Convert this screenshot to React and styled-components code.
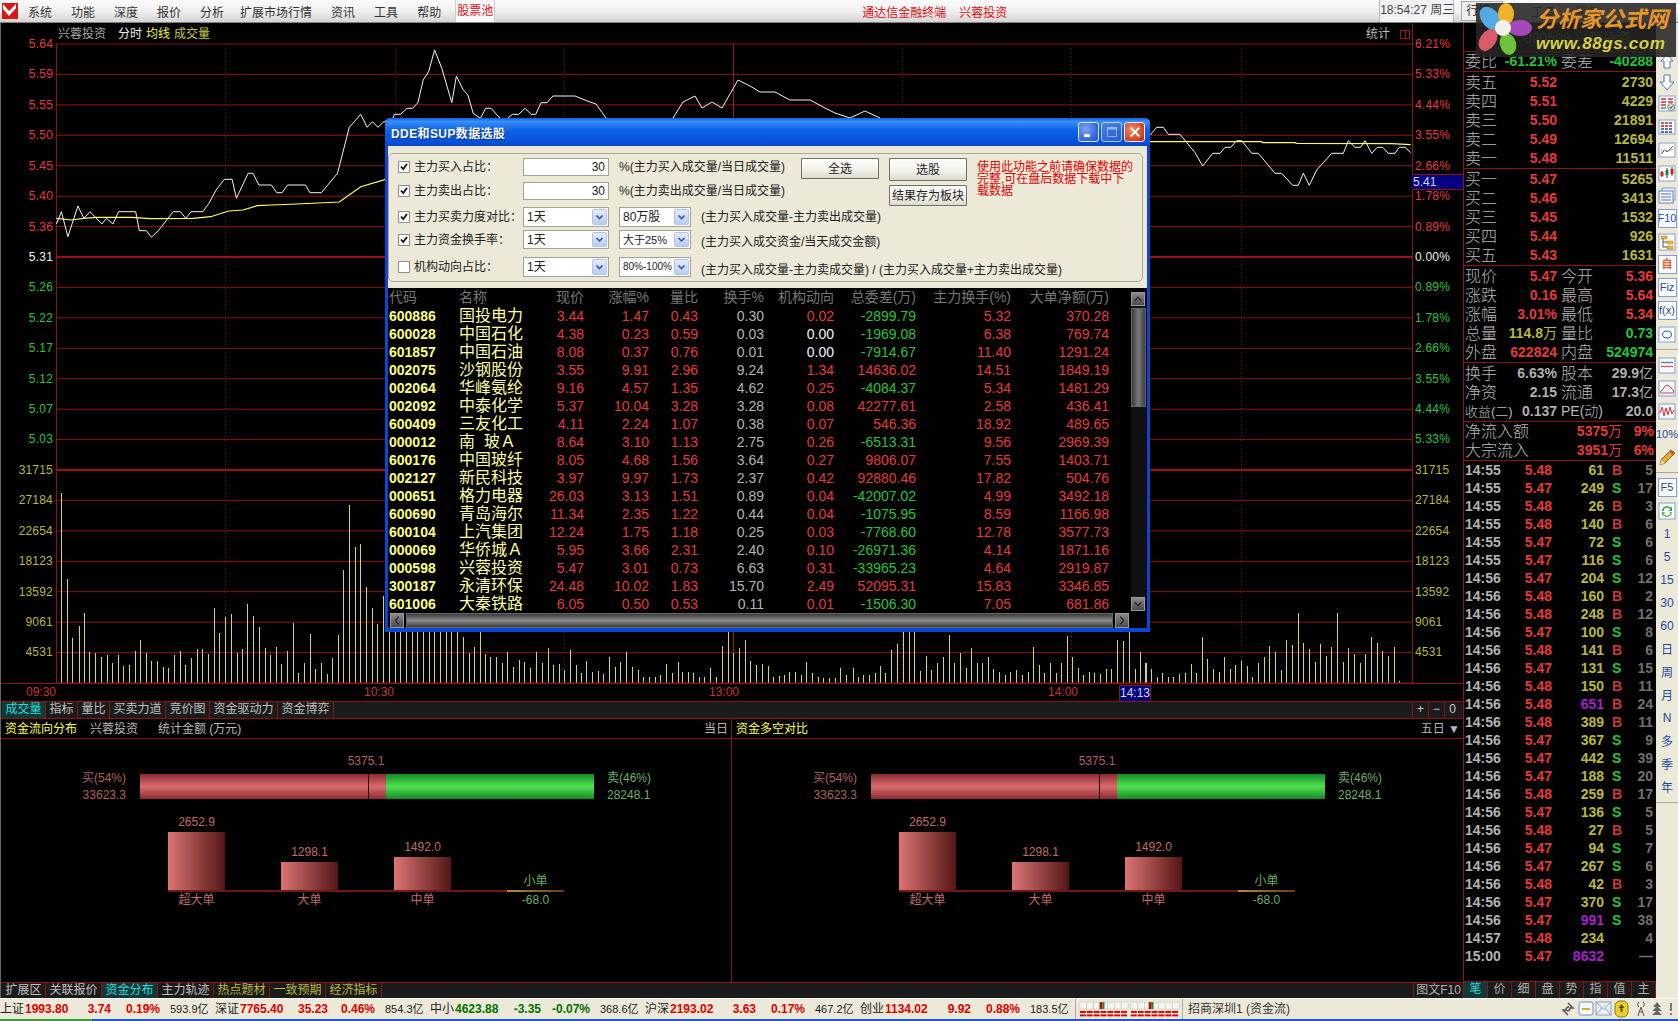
import React from 'react'
import styled, { createGlobalStyle } from 'styled-components'

const RED = '#8c1414'
const UP = '#e63a3a'
const DOWN = '#25c43a'
const OLIVE = '#b8b83a'

const GlobalStyle = createGlobalStyle`
  html, body { margin: 0; padding: 0; background: #000; overflow: hidden; }
  body { font-family: "Liberation Sans", "Noto Sans CJK SC", sans-serif; font-size: 12px; }
  * { box-sizing: border-box; }
`

const Page = styled.div`
  position: relative;
  width: 1678px;
  height: 1021px;
  display: flex;
  flex-direction: column;
  overflow: hidden;
`

/* ---- menu ---- */
const MenuBar = styled.div`
  height: 23px;
  flex: none;
  display: flex;
  align-items: center;
  background: linear-gradient(#fbfbfb, #f0f0f0 50%, #d4d4d4);
  border-bottom: 1px solid #808080;
  color: #333;
  font-size: 12px;
  padding-left: 2px;
`
const MenuLogo = styled.svg`
  width: 16px;
  height: 16px;
  margin-right: 10px;
  flex: none;
`
const MenuItem = styled.span`
  margin-right: 19px;
  margin-left: ${p => p.$ml || 0}px;
  white-space: nowrap;
`
const PoolButton = styled.span`
  width: 40px;
  height: 22px;
  margin-left: -5px;
  line-height: 22px;
  text-align: center;
  color: #e01010;
  background: #f8f8f8;
  border-left: 1px solid #ccc;
  border-right: 1px solid #ccc;
`
const MenuTitle = styled.span`
  color: ${p => p.$dim ? '#555' : '#e01010'};
  margin-left: ${p => p.$ml}px;
  white-space: nowrap;
`
const ClockBox = styled.span`
  width: 75px;
  height: 22px;
  margin-left: 372px;
  line-height: 21px;
  text-align: center;
  color: #444;
  font-size: 12px;
  white-space: nowrap;
  background: #f2f2f2;
  border-left: 1px solid #bbb;
  border-right: 1px solid #bbb;
`
const QuoteButton = styled.span`
  width: 42px;
  height: 20px;
  margin-left: 7px;
  padding-left: 4px;
  line-height: 18px;
  color: #333;
  border: 1px solid #aaa;
  background: #eee;
`

/* ---- page columns ---- */
const Main = styled.div`
  flex: 1;
  min-height: 0;
  display: flex;
`
const LeftColumn = styled.div`
  width: 1463px;
  flex: none;
  display: flex;
  flex-direction: column;
  border-left: 1px solid #666;
  background: #000;
`

/* ---- chart ---- */
const Chart = styled.div`
  position: relative;
  height: 660px;
  flex: none;
  display: flex;
`
const ChartTitle = styled.div`
  position: absolute;
  left: 57px;
  top: 2px;
  display: flex;
  gap: 4px;
  line-height: 18px;
  font-size: 12px;
  white-space: nowrap;
  color: #f0f0f0;
`
const TitleText = styled.span`
  color: ${p => p.$color || '#f0f0f0'};
  margin-right: ${p => p.$mr || 0}px;
`
const ChartStat = styled.div`
  position: absolute;
  left: 1365px;
  top: 2px;
  line-height: 18px;
  color: #bbb;
  display: flex;
  align-items: center;
  gap: 10px;
`
const StatIcon = styled.span`
  width: 10px;
  height: 9px;
  border: 1px solid #a01818;
  background: linear-gradient(90deg, transparent 4px, #a01818 4px, #a01818 5px, transparent 5px);
`
const Axis = styled.div`
  width: ${p => p.$w}px;
  flex: none;
  padding-top: 6px;
  ${p => p.$right ? `border-left: 1px solid ${RED}; padding-left: 2px;` : ''}
`
const AxisLabel = styled.div`
  height: 30.43px;
  line-height: 30px;
  font-size: 12px;
  color: ${p => p.$color};
  text-align: ${p => p.$right ? 'left' : 'right'};
  padding-right: ${p => p.$right ? 0 : 3}px;
  letter-spacing: 0.2px;
`
const Plot = styled.svg`
  width: 1356px;
  height: 660px;
  flex: none;
  display: block;
`
const PriceFlag = styled.div`
  position: absolute;
  left: 1411px;
  top: 151px;
  width: 51px;
  height: 16px;
  background: #000080;
  border-top: 1px solid ${RED};
  border-bottom: 1px solid ${RED};
  color: #d8d8ff;
  line-height: 14px;
  padding-left: 1px;
  font-size: 12px;
`

/* ---- time axis ---- */
const TimeRow = styled.div`
  height: 18px;
  flex: none;
  display: flex;
  align-items: stretch;
  border-top: 1px solid ${RED};
  line-height: 17px;
  color: #c83232;
`
const TimeLabel = styled.span`
  margin-left: ${p => p.$ml}px;
  width: 30px;
  white-space: nowrap;
`
const TimeCursor = styled.span`
  margin-left: ${p => p.$ml}px;
  width: 32px;
  margin-top: 1px;
  background: #000080;
  border: 1px solid ${RED};
  border-bottom: 0;
  color: #d8d8ff;
  text-align: center;
  line-height: 14px;
`

/* ---- tabs ---- */
const TabRow = styled.div`
  height: ${p => p.$h}px;
  flex: none;
  display: flex;
  background: #1b1b1b;
  border-top: 1px solid ${RED};
  padding-left: 1px;
  padding-right: ${p => p.$pr || 0}px;
`
const Tab = styled.span`
  padding: 0 3.5px;
  line-height: ${p => p.$lh || 15}px;
  white-space: nowrap;
  color: ${p => p.$active ? '#35d8d8' : p.$olive ? '#b8b83a' : '#c0c0c0'};
  background: ${p => p.$active ? '#0e3a3a' : 'transparent'};
  border-right: 1px solid ${RED};
`
const TabSpacer = styled.span`
  flex: 1;
`
const ZoomCell = styled.span`
  width: 16px;
  line-height: 15px;
  text-align: center;
  color: #ccc;
  border-left: 1px solid ${RED};
`
const TabWide = styled.span`
  width: 50px;
  line-height: 15px;
  text-align: center;
  color: #b0b0b0;
  border-left: 1px solid ${RED};
`

/* ---- fund panels ---- */
const PanelHeader = styled.div`
  height: 21px;
  flex: none;
  display: flex;
  align-items: center;
  border-top: 1px solid ${RED};
  border-bottom: 1px solid ${RED};
  color: #b8b8b8;
  line-height: 18px;
`
const HeaderCell = styled.div`
  width: ${p => p.$w}px;
  height: 100%;
  flex: none;
  display: flex;
  align-items: center;
  padding: 0 3px 0 4px;
  ${p => p.$split ? `border-right: 1px solid ${RED};` : ''}
`
const HeaderTitle = styled.span`
  color: #ffff40;
  margin-right: 13px;
`
const HeaderNote = styled.span`
  margin-right: ${p => p.$mr || 0}px;
`
const HeaderEnd = styled.span`
  margin-left: auto;
  white-space: nowrap;
`
const Panels = styled.div`
  flex: 1;
  min-height: 0;
  display: flex;
`
const Panel = styled.div`
  width: ${p => p.$w}px;
  flex: none;
  padding: 35px 0 0 ${p => p.$pl}px;
  ${p => p.$split ? `border-right: 1px solid ${RED};` : ''}
`
const FlowRow = styled.div`
  display: flex;
  align-items: center;
  height: 25px;
`
const FlowLabels = styled.div`
  width: ${p => p.$w}px;
  flex: none;
  text-align: ${p => p.$side === 'left' ? 'right' : 'left'};
  line-height: 17px;
  color: ${p => p.$side === 'left' ? '#b06060' : '#68b068'};
`
const FlowBar = styled.div`
  position: relative;
  width: 454px;
  height: 25px;
  flex: none;
  margin: 0 13px 0 14px;
  display: flex;
`
const FlowBuy = styled.div`
  width: 246px;
  background: linear-gradient(#8c2a30, #d96c6c 50%, #8c2a30);
`
const FlowSell = styled.div`
  flex: 1;
  background: linear-gradient(#128a25, #52e052 50%, #128a25);
`
const FlowTick = styled.div`
  position: absolute;
  left: 228px;
  top: 0;
  bottom: 0;
  width: 1px;
  background: #1a0505;
`
const FlowValue = styled.div`
  position: absolute;
  left: 206px;
  top: -20px;
  width: 40px;
  text-align: center;
  color: #b06060;
`
const Columns = styled.div`
  height: 96px;
  display: flex;
  align-items: flex-end;
  margin: 14px 0 0 ${p => p.$ml}px;
`
const ColumnSlot = styled.div`
  width: 113px;
  flex: none;
  display: flex;
  flex-direction: column;
  align-items: flex-start;
`
const ColumnText = styled.div`
  width: 57px;
  text-align: center;
  line-height: 17px;
  white-space: nowrap;
  color: ${p => p.$green ? '#68b068' : '#c06a6a'};
`
const ColumnBar = styled.div`
  width: 57px;
  height: ${p => p.$h}px;
  margin-top: 1px;
  background: linear-gradient(90deg, #dc7474, #551616);
`
const Baseline = styled.div`
  align-self: stretch;
  height: 2px;
  background: #701818;
`
const SmallLine = styled.div`
  width: 57px;
  height: 2px;
  background: linear-gradient(90deg, #b08a40, #6a3a18);
`

/* ---- quote panel ---- */
const Quote = styled.div`
  width: 193px;
  flex: none;
  display: flex;
  flex-direction: column;
  background: #000;
  border-left: 1px solid ${RED};
`
const QuoteHead = styled.div`
  height: 29px;
  flex: none;
  padding: 6px 0 0 60px;
  color: #4f7a2a;
  font-size: 14px;
  line-height: 18px;
  white-space: nowrap;
  border-bottom: 1px solid ${RED};
`
const Section = styled.div`
  flex: none;
  padding-top: ${p => p.$pt || 0}px;
  border-bottom: 1px solid ${RED};
`
const QuoteRow = styled.div`
  height: 19px;
  display: grid;
  grid-template-columns: 30px 62px 4px 32px 60px;
  padding-left: 1px;
  align-items: center;
  line-height: 19px;
  white-space: nowrap;
`
const Cn = styled.span`
  grid-column: ${p => p.$col};
  color: #b8b8b8;
  font-size: ${p => p.$fs || 16}px;
  font-weight: 300;
`
const Num = styled.span`
  grid-column: ${p => p.$col};
  justify-self: end;
  font-size: 14px;
  font-weight: bold;
  color: ${p => p.$color || UP};
`
const NumCn = styled.span`
  font-weight: normal;
`
const FlowInfoRow = styled.div`
  height: 19px;
  display: grid;
  grid-template-columns: 100px 57px 32px;
  padding-left: 1px;
  line-height: 19px;
  white-space: nowrap;
`
const Ticks = styled.div`
  flex: 1;
  min-height: 0;
`
const TickRow = styled.div`
  height: 18px;
  display: grid;
  grid-template-columns: 36px 51px 52px 18px 31px;
  padding-left: 1px;
  line-height: 18px;
  font-size: 14px;
  font-weight: bold;
  white-space: nowrap;
`
const TickCell = styled.span`
  text-align: ${p => p.$left ? 'left' : 'right'};
  padding-left: ${p => p.$pl || 0}px;
  color: ${p => p.$color};
`
const QuoteTabs = styled.div`
  height: 17px;
  flex: none;
  display: flex;
  background: #1b1b1b;
  border-top: 1px solid ${RED};
`
const QuoteTab = styled.span`
  width: 24px;
  line-height: 15px;
  text-align: center;
  color: ${p => p.$active ? '#35d8d8' : '#b0b0b0'};
  background: ${p => p.$active ? '#0e3a3a' : 'transparent'};
  border-right: 1px solid ${RED};
`

/* ---- right toolbar ---- */
const Tools = styled.div`
  width: 22px;
  flex: none;
  display: flex;
  flex-direction: column;
  background: #ece9d8;
  padding-top: 27px;
  color: #1c4aa0;
`
const ToolSlot = styled.div`
  height: ${p => p.$h || 23}px;
  flex: none;
  display: flex;
  align-items: center;
  justify-content: center;
  font-size: ${p => p.$fs || 13}px;
`
const ToolBox = styled.div`
  width: 19px;
  height: 19px;
  display: flex;
  align-items: center;
  justify-content: center;
  background: #fbfbff;
  border: 1px solid #7f9fd8;
  font-size: 11px;
  line-height: 1;
  color: ${p => p.$orange ? '#d86820' : '#1c4aa0'};
  font-weight: ${p => p.$orange ? 'bold' : 'normal'};
  overflow: hidden;
`
const ToolSep = styled.div`
  height: 8px;
  flex: none;
  position: relative;
  &::after {
    content: "";
    position: absolute;
    left: 0;
    right: 0;
    top: 4px;
    height: 1px;
    background: #aaa89a;
  }
`

/* ---- status bar ---- */
const Status = styled.div`
  height: 21px;
  flex: none;
  display: flex;
  align-items: center;
  background: #ece9d8;
  border-top: 1px solid #fff;
  line-height: 18px;
  white-space: nowrap;
  color: #222;
`
const IndexCell = styled.div`
  width: 215px;
  flex: none;
  display: grid;
  grid-template-columns: 25px 58px 28px 49px 55px;
  align-items: center;
`
const IndexName = styled.span`
  font-size: 12px;
  color: #222;
`
const IndexNum = styled.span`
  font-size: 12px;
  font-weight: bold;
  text-align: ${p => p.$right ? 'right' : 'left'};
  color: ${p => p.$down ? '#007000' : '#e00000'};
`
const IndexAmt = styled.span`
  font-size: 11px;
  padding-left: 10px;
  color: #222;
`
const SignalBox = styled.svg`
  width: 108px;
  height: 20px;
  flex: none;
  margin-left: 0;
  border-left: 1px solid #aaa;
  border-right: 1px solid #aaa;
`
const ServerName = styled.span`
  margin-left: 5px;
  color: #333;
`
const StatusIcons = styled.svg`
  width: 118px;
  height: 20px;
  margin-left: auto;
  margin-right: 0;
  flex: none;
`
const TaskStrip = styled.div`
  height: 2px;
  flex: none;
  background: linear-gradient(90deg, #3c9a3c 92px, #2458c8 92px);
`

/* ---- logo overlay ---- */
const Logo = styled.div`
  position: absolute;
  left: 1476px;
  top: 3px;
  width: 200px;
  height: 54px;
  background: rgba(38, 38, 38, 0.88);
  display: flex;
  z-index: 5;
`
const LogoFlower = styled.svg`
  width: 56px;
  height: 52px;
  flex: none;
`
const LogoText = styled.div`
  padding: 3px 0 0 4px;
  font-style: italic;
  font-weight: bold;
  white-space: nowrap;
`
const LogoName = styled.div`
  font-size: 22px;
  line-height: 28px;
  color: #e8962a;
`
const LogoUrl = styled.div`
  font-size: 17px;
  line-height: 20px;
  color: #d8d040;
  letter-spacing: 0.6px;
`

/* ---- dialog ---- */
const Dialog = styled.div`
  position: absolute;
  left: 385px;
  top: 118px;
  width: 765px;
  height: 514px;
  display: flex;
  flex-direction: column;
  z-index: 4;
  background: #0a46d8;
  border-radius: 5px 5px 0 0;
`
const TitleBar = styled.div`
  height: 28px;
  flex: none;
  display: flex;
  align-items: center;
  gap: 2px;
  padding: 0 5px 0 6px;
  border-radius: 5px 5px 0 0;
  background: linear-gradient(#0a5fe8, #3a8ef6 12%, #0b62e6 45%, #0550da 85%, #0a46c8);
`
const DialogTitle = styled.span`
  flex: 1;
  color: #fff;
  font-size: 12px;
  font-weight: bold;
  letter-spacing: 0.4px;
  text-shadow: 1px 1px 0 #0a2f90;
  white-space: nowrap;
`
const WinBtn = styled.span`
  position: relative;
  width: 21px;
  height: 20px;
  display: flex;
  align-items: center;
  justify-content: center;
  border: 1px solid #dfe8fb;
  border-radius: 3px;
  background: ${p => p.$close
    ? 'radial-gradient(circle at 35% 35%, #ee8a6a, #d8401a 70%, #b83010)'
    : p.$off ? 'linear-gradient(135deg, #5a86e2, #2f5fd0)' : 'radial-gradient(circle at 35% 35%, #7aa6f4, #2a5fe0 75%)'};
  opacity: ${p => p.$off ? 0.75 : 1};
`
const DialogBody = styled.div`
  flex: 1;
  min-height: 0;
  margin: 0 3px 4px;
  display: flex;
  flex-direction: column;
  background: #ece9d8;
`
const Group = styled.div`
  height: 129px;
  flex: none;
  margin: 7px 4px 6px 0;
  padding: 4px 0 0 9px;
  border: 1px solid #aca899;
  border-radius: 5px;
  color: #222;
  line-height: 16px;
`
const TopBlock = styled.div`
  display: flex;
  height: 49px;
`
const TopRows = styled.div`
  width: 403px;
  flex: none;
  display: flex;
  flex-direction: column;
  gap: 6px;
`
const FormRow = styled.div`
  display: flex;
  align-items: center;
  height: ${p => p.$h}px;
  margin-top: ${p => p.$mt || 0}px;
  white-space: nowrap;
`
const CheckMark = styled.span`
  width: 12px;
  height: 12px;
  flex: none;
  margin-right: 4px;
  display: flex;
  background: #fff;
  border: 1px solid #8e8f8f;
`
const FormLabel = styled.span`
  width: 109px;
  flex: none;
  font-size: 12px;
`
const NumInput = styled.span`
  width: 86px;
  height: 100%;
  flex: none;
  display: flex;
  align-items: center;
  justify-content: flex-end;
  padding-right: 3px;
  background: #fff;
  border: 1px solid #a5a294;
  font-size: 12px;
`
const Combo = styled.span`
  width: ${p => p.$w}px;
  height: 100%;
  flex: none;
  margin-left: ${p => p.$ml || 0}px;
  display: flex;
  align-items: center;
  padding: 1px 1px 1px 3px;
  background: #fff;
  border: 1px solid #a5a294;
  font-size: ${p => p.$fs || 12}px;
`
const ComboText = styled.span`
  flex: 1;
  min-width: 0;
  white-space: nowrap;
`
const ComboArrow = styled.svg`
  width: 15px;
  height: 100%;
  flex: none;
  border-radius: 2px;
  background: linear-gradient(#e4ecfc, #b8ccf4);
  border: 1px solid #b0c4ec;
`
const FormNote = styled.span`
  margin-left: ${p => p.$ml}px;
  padding-top: ${p => p.$pt || 0}px;
  font-size: 12px;
`
const ButtonCol = styled.div`
  width: 78px;
  flex: none;
  margin-right: 10px;
  display: flex;
  flex-direction: column;
  gap: 4px;
`
const GrayButton = styled.div`
  height: ${p => p.$h}px;
  display: flex;
  align-items: center;
  justify-content: center;
  white-space: nowrap;
  background: linear-gradient(#fff, #f2f1ea 60%, #dcd9cc);
  border: 1px solid #6f6f66;
  border-radius: 1px;
  font-size: 12px;
`
const Warning = styled.div`
  width: 158px;
  flex: none;
  color: #e80000;
  font-size: 12px;
  line-height: 12px;
  padding-top: 3px;
`

/* ---- dialog list ---- */
const ListWrap = styled.div`
  flex: 1;
  min-height: 0;
  display: flex;
  flex-direction: column;
  background: #000;
`
const ListMain = styled.div`
  flex: 1;
  min-height: 0;
  display: flex;
`
const Table = styled.div`
  flex: 1;
  min-width: 0;
  overflow: hidden;
`
const gridCols = '70px 66px 59px 65px 49px 66px 70px 82px 95px 98px'
const HeadRow = styled.div`
  height: 19px;
  display: grid;
  grid-template-columns: ${gridCols};
  padding-left: 1px;
  line-height: 18px;
  font-size: 14px;
  color: #777;
  white-space: nowrap;
`
const DataRow = styled.div`
  height: 18px;
  display: grid;
  grid-template-columns: ${gridCols};
  padding-left: 1px;
  line-height: 18px;
  font-size: 14px;
  white-space: nowrap;
`
const Cell = styled.span`
  text-align: ${p => p.$left ? 'left' : 'right'};
  color: ${p => p.$color || UP};
  font-size: ${p => p.$fs || 14}px;
  font-weight: ${p => p.$bold ? 'bold' : 'normal'};
`
const VScroll = styled.div`
  width: 15px;
  flex: none;
  margin: 4px 1px 1px 0;
  display: flex;
  flex-direction: column;
  gap: 2px;
  background: #111;
`
const ScrollBtn = styled.svg`
  flex: none;
  width: ${p => p.$w}px;
  height: ${p => p.$h}px;
  background: linear-gradient(#8a8a8a, #4a4a4a);
  border: 1px solid #999;
`
const VThumb = styled.div`
  height: 99px;
  flex: none;
  background: linear-gradient(90deg, #3c3c3c, #7a7a7a 50%, #3c3c3c);
  border: 1px solid #666;
`
const VTrack = styled.div`
  flex: 1;
`
const HScroll = styled.div`
  height: 16px;
  flex: none;
  display: flex;
  gap: 2px;
  padding: 1px 18px 0 2px;
  background: #000;
`
const HThumb = styled.div`
  flex: 1;
  background: linear-gradient(#3c3c3c, #8a8a8a 50%, #3c3c3c);
  border: 1px solid #666;
`

/* ---- data ---- */
const priceLabels = [
  ['5.64', UP], ['5.59', UP], ['5.55', UP], ['5.50', UP], ['5.45', UP], ['5.40', UP], ['5.36', UP],
  ['5.31', '#f0f0f0'],
  ['5.26', DOWN], ['5.22', DOWN], ['5.17', DOWN], ['5.12', DOWN], ['5.07', DOWN], ['5.03', DOWN],
]
const pctLabels = [
  ['6.21%', UP], ['5.33%', UP], ['4.44%', UP], ['3.55%', UP], ['2.66%', UP], ['1.78%', UP], ['0.89%', UP],
  ['0.00%', '#f0f0f0'],
  ['0.89%', DOWN], ['1.78%', DOWN], ['2.66%', DOWN], ['3.55%', DOWN], ['4.44%', DOWN], ['5.33%', DOWN],
]
const volLabels = ['31715', '27184', '22654', '18123', '13592', '9061', '4531']

const zoom1 = (a) => a.map(([x, y]) => [x / 2.8, y / 3])
const zoom11 = (a) => a.map(([x, y]) => [x / 3 + 1140, y / 3])

const pricePoints = [
  ...zoom1([[158,672],[172,635],[190,710],[218,618],[235,655],[252,635],[285,672],[298,655],[316,672],[332,635],[380,635],[390,692],[410,692],[424,712],[445,690],[485,635],[505,635],[520,655],[535,635],[568,635],[585,610],[605,570],[628,538],[650,538],[662,595],[695,520],[708,520],[725,555],[760,555],[775,578],[790,578],[805,555],[855,555],[868,578],[900,578],[945,520],[978,382],[1010,343],[1028,382],[1043,365],[1058,382],[1075,365],[1100,355],[1105,343],[1122,343],[1140,325],[1155,325],[1170,308],[1185,240],[1200,215],[1217,150],[1237,205],[1265,308],[1278,228],[1296,268],[1310,285],[1325,340],[1345,355],[1360,325],[1375,325],[1400,355],[1415,360],[1435,343],[1452,343],[1470,325],[1487,343],[1500,343],[1515,308],[1532,308],[1548,288],[1568,288]]),
  [575, 96], [590, 102], [596, 104], [606, 118], [625, 135], [650, 135], [673, 118], [683, 102], [695, 96], [702, 108], [712, 102], [722, 108], [738, 80], [750, 86], [760, 92], [775, 92], [790, 100], [810, 100], [825, 108], [835, 113], [850, 118], [865, 111], [880, 118], [900, 140], [1000, 135], [1100, 135], [1136, 118],
  ...zoom11([[30,405],[50,382],[70,382],[85,403],[120,403],[165,458],[188,498],[218,460],[240,460],[255,442],[272,442],[290,422],[305,422],[335,460],[355,460],[405,520],[425,520],[458,556],[475,556],[490,520],[508,556],[530,510],[575,460],[610,460],[625,422],[645,442],[662,442],[675,422],[695,460],[712,442],[728,442],[745,460],[765,460],[778,442],[795,442],[812,458]]),
]
const avgPoints = [
  ...zoom1([[158,655],[200,660],[235,655],[270,652],[370,652],[420,656],[540,655],[590,650],[640,633],[680,630],[720,617],[760,615],[830,612],[950,606],[1010,560],[1080,538]]),
  [800, 150],
  ...zoom11([[30,425],[365,425],[368,428],[465,428],[470,430],[755,431],[812,434]]),
]
const toPath = (pts) => pts.map(([x, y], i) => `${i ? 'L' : 'M'}${x.toFixed(1)} ${y.toFixed(1)}`).join('')

const volLeft = [[184,160],[202,418],[217,595],[236,558],[253,520],[268,637],[286,640],[304,652],[320,645],[337,670],[355,645],[370,678],[388,675],[406,633],[421,600],[439,640],[454,663],[472,663],[490,682],[505,685],[523,645],[541,633],[556,675],[574,654],[592,628],[607,628],[625,642],[643,505],[658,580],[676,531],[694,522],[710,638],[727,628],[742,492],[760,528],[778,562],[794,625],[811,645],[829,622],[844,672],[862,633],[880,550],[895,700],[913,670],[931,582],[946,687],[964,668],[982,702],[997,655],[1015,585],[1030,390],[1048,196],[1066,320],[1081,312],[1099,442],[1117,505],[1132,552],[1150,468]]
const volMiddle = [[18,680],[30,680],[41,680],[52,680],[64,680],[75,680],[86,680],[98,680],[109,680],[120,680],[132,680],[143,680],[155,680],[166,712],[178,760],[188,740],[200,680],[211,762],[222,770],[234,772],[245,790],[256,755],[267,800],[279,780],[290,785],[301,805],[313,755],[325,790],[337,745],[348,795],[360,792],[370,810],[382,750],[393,795],[404,820],[415,782],[426,815],[438,812],[449,822],[461,770],[472,802],[483,785],[495,755],[507,800],[518,810],[529,832],[541,832],[552,832],[563,825],[574,792],[586,820],[598,785],[608,815],[619,815],[630,818],[641,832],[652,830],[664,805],[675,830],[687,738],[699,680],[710,760],[722,745],[733,720],[744,782],[756,795],[767,793],[779,797],[790,832],[801,828],[812,825],[823,815],[835,815],[846,825],[857,785],[868,820],[880,832],[891,835],[903,835],[914,835],[925,805],[937,825],[950,803],[960,832],[971,825],[983,825],[994,820],[1005,797],[1016,820],[1028,750],[1040,732],[1051,680],[1063,680],[1074,680],[1085,812],[1097,768],[1108,810],[1120,790],[1131,772],[1143,706],[1154,790],[1166,760],[1177,805],[1188,745],[1200,790],[1211,790],[1222,770],[1233,808],[1245,815],[1256,825],[1267,815],[1279,810],[1290,825],[1302,815],[1313,740],[1324,795],[1335,820],[1346,788],[1358,820],[1369,790],[1380,708],[1391,770],[1403,805],[1414,825],[1425,815],[1436,818],[1448,822],[1459,808],[1470,808],[1482,720],[1494,722],[1505,680],[1517,808],[1528,755],[1540,788]]
const volRight = [[0,95],[15,128],[33,147],[50,170],[67,160],[85,170],[100,172],[118,162],[135,160],[152,132],[168,158],[187,50],[202,117],[220,147],[238,155],[253,110],[270,147],[286,135],[304,122],[321,138],[337,170],[355,128],[373,110],[388,78],[406,95],[423,150],[438,60],[457,75],[475,-20],[490,68],[508,87],[525,125],[541,72],[558,107],[574,80],[592,-20],[609,125],[625,83],[643,102],[660,128],[676,102],[694,52],[712,70],[727,93],[745,107],[763,80],[778,183]]
const volBars = [
  ...volLeft.map(([x, y]) => [x / 3, y / 3 + 440]),
  ...volMiddle.map(([x, y]) => [x / 2.01 + 380, y / 3 + 400]),
  ...volRight.map(([x, y]) => [x / 3 + 1140, y / 3 + 620]),
]

const gridY = Array.from({ length: 21 }, (_, i) => 44 + i * 30.43)
const gridX = [225, 395, 564, 902, 1071, 1241]

const sells = [['卖五', '5.52', '2730'], ['卖四', '5.51', '4229'], ['卖三', '5.50', '21891'], ['卖二', '5.49', '12694'], ['卖一', '5.48', '11511']]
const buys = [['买一', '5.47', '5265'], ['买二', '5.46', '3413'], ['买三', '5.45', '1532'], ['买四', '5.44', '926'], ['买五', '5.43', '1631']]

const ticks = [
  ['14:55','5.48',61,'B',5],['14:55','5.47',249,'S',17],['14:55','5.48',26,'B',3],['14:55','5.48',140,'B',6],
  ['14:55','5.47',72,'S',6],['14:55','5.47',116,'S',6],['14:56','5.47',204,'S',12],['14:56','5.48',160,'B',2],
  ['14:56','5.48',248,'B',12],['14:56','5.47',100,'S',8],['14:56','5.48',141,'B',6],['14:56','5.47',131,'S',15],
  ['14:56','5.48',150,'B',11],['14:56','5.48',651,'B',24],['14:56','5.48',389,'B',11],['14:56','5.47',367,'S',9],
  ['14:56','5.47',442,'S',39],['14:56','5.47',188,'S',20],['14:56','5.48',259,'B',17],['14:56','5.47',136,'S',5],
  ['14:56','5.48',27,'B',5],['14:56','5.47',94,'S',7],['14:56','5.47',267,'S',6],['14:56','5.48',42,'B',3],
  ['14:56','5.47',370,'S',17],['14:56','5.47',991,'S',38],['14:57','5.48',234,'',4],['15:00','5.47',8632,'','—'],
]

const stocks = [
  ['600886','国投电力','3.44','1.47','0.43','0.30','0.02','-2899.79','5.32','370.28'],
  ['600028','中国石化','4.38','0.23','0.59','0.03','0.00','-1969.08','6.38','769.74'],
  ['601857','中国石油','8.08','0.37','0.76','0.01','0.00','-7914.67','11.40','1291.24'],
  ['002075','沙钢股份','3.55','9.91','2.96','9.24','1.34','14636.02','14.51','1849.19'],
  ['002064','华峰氨纶','9.16','4.57','1.35','4.62','0.25','-4084.37','5.34','1481.29'],
  ['002092','中泰化学','5.37','10.04','3.28','3.28','0.08','42277.61','2.58','436.41'],
  ['600409','三友化工','4.11','2.24','1.07','0.38','0.07','546.36','18.92','489.65'],
  ['000012','南\u00a0\u00a0玻Ａ','8.64','3.10','1.13','2.75','0.26','-6513.31','9.56','2969.39'],
  ['600176','中国玻纤','8.05','4.68','1.56','3.64','0.27','9806.07','7.55','1403.71'],
  ['002127','新民科技','3.97','9.97','1.73','2.37','0.42','92880.46','17.82','504.76'],
  ['000651','格力电器','26.03','3.13','1.51','0.89','0.04','-42007.02','4.99','3492.18'],
  ['600690','青岛海尔','11.34','2.35','1.22','0.44','0.04','-1075.95','8.59','1166.98'],
  ['600104','上汽集团','12.24','1.75','1.18','0.25','0.03','-7768.60','12.78','3577.73'],
  ['000069','华侨城Ａ','5.95','3.66','2.31','2.40','0.10','-26971.36','4.14','1871.16'],
  ['000598','兴蓉投资','5.47','3.01','0.73','6.63','0.31','-33965.23','4.64','2919.87'],
  ['300187','永清环保','24.48','10.02','1.83','15.70','2.49','52095.31','15.83','3346.85'],
  ['601006','大秦铁路','6.05','0.50','0.53','0.11','0.01','-1506.30','7.05','681.86'],
]

const indices = [
  ['上证','1993.80','3.74','0.19%','593.9亿'],
  ['深证','7765.40','35.23','0.46%','854.3亿'],
  ['中小','4623.88','-3.35','-0.07%','368.6亿'],
  ['沪深','2193.02','3.63','0.17%','467.2亿'],
  ['创业','1134.02','9.92','0.88%','183.5亿'],
]

/* ---- small drawings ---- */
const Chevron = () => (
  <ComboArrow viewBox="0 0 15 18" preserveAspectRatio="none">
    <path d="M4 7l3.5 4L11 7" fill="none" stroke="#3a5aa0" strokeWidth="2" />
  </ComboArrow>
)

const Check = ({ on }) => (
  <CheckMark>
    {on && (
      <svg viewBox="0 0 10 10" width="10" height="10">
        <path d="M2 4.5l2.2 2.5L8 2" fill="none" stroke="#111" strokeWidth="1.8" />
      </svg>
    )}
  </CheckMark>
)

const Icon = ({ children }) => (
  <svg viewBox="0 0 20 20" width="20" height="20">{children}</svg>
)

const toolIcons = {
  up: <Icon><path d="M10 3l6 7h-3v7H7v-7H4z" fill="#fff" stroke="#4a78c8" /></Icon>,
  down: <Icon><path d="M10 18l7-8h-4V3H7v7H3z" fill="#fff" stroke="#4a78c8" /></Icon>,
  sheet: <Icon><rect x="2" y="2" width="16" height="15" fill="#fff" stroke="#7f9fd8" /><path d="M4 5h5M11 5h5M4 8h5M11 8h5M4 11h5" stroke="#d03030" strokeWidth="1.5" /><path d="M4 14h5" stroke="#30a030" strokeWidth="1.5" /><circle cx="14" cy="13" r="3.5" fill="#ddd" stroke="#888" /><path d="M12.5 13l1.2 1.3 2-2.5" stroke="#333" fill="none" /></Icon>,
  grid: <Icon><rect x="2" y="3" width="16" height="14" fill="#fff" stroke="#7f9fd8" /><path d="M4 6h12M4 9h12" stroke="#c02020" strokeWidth="1.5" strokeDasharray="3 1" /><path d="M4 12h12M4 15h12" stroke="#2040b0" strokeWidth="1.5" strokeDasharray="3 1" /></Icon>,
  line: <Icon><rect x="2" y="3" width="16" height="14" fill="#fff" stroke="#7f9fd8" /><path d="M4 14l4-4 2 2 6-6" fill="none" stroke="#d03030" /><path d="M4 11l4-1 3 1 5-2" fill="none" stroke="#80a0d0" /></Icon>,
  candle: <Icon><rect x="2" y="3" width="16" height="15" fill="#fff" stroke="#7f9fd8" /><path d="M5 8v6M10 5v10M15 4v9" stroke="#333" /><rect x="3.5" y="9" width="3" height="4" fill="#d02020" /><rect x="8.5" y="7" width="3" height="5" fill="#208030" /><rect x="13.5" y="6" width="3" height="5" fill="#d02020" /></Icon>,
  docs: <Icon><rect x="5" y="2" width="13" height="12" fill="#eef" stroke="#7f9fd8" /><rect x="2" y="5" width="14" height="12" fill="#fff" stroke="#5a7fc0" /><path d="M4 8h10M4 11h10M4 14h10" stroke="#4a6aa8" /></Icon>,
  tree: <Icon><rect x="2" y="2" width="16" height="16" fill="#fff" stroke="#7f9fd8" /><rect x="4" y="4" width="6" height="3" fill="#e8b830" stroke="#a08020" strokeWidth=".5" /><rect x="10" y="9" width="6" height="3" fill="#e8b830" stroke="#a08020" strokeWidth=".5" /><rect x="10" y="14" width="6" height="3" fill="#e8b830" stroke="#a08020" strokeWidth=".5" /><path d="M6 7v8h4M6 10h4" stroke="#555" fill="none" /></Icon>,
  circle: <Icon><rect x="2" y="3" width="16" height="15" fill="#fff" stroke="#7f9fd8" /><ellipse cx="10" cy="10.5" rx="4.5" ry="3.5" fill="none" stroke="#2a4ea0" /></Icon>,
  wave1: <Icon><rect x="2" y="3" width="16" height="15" fill="#f8f8ff" stroke="#7f9fd8" /><path d="M4 8l2-1 2 1 2-1 2 1 2-1 2 1" fill="none" stroke="#3050c0" /><path d="M4 12l2-1 2 1 2-1 2 1 2-1 2 1" fill="none" stroke="#d03030" /></Icon>,
  wave2: <Icon><rect x="2" y="3" width="16" height="15" fill="#f8f8ff" stroke="#7f9fd8" /><path d="M3 14l3-3 2-3 3-1 3 3 2 2 1 2" fill="none" stroke="#d04040" /><path d="M3 15h14" stroke="#d04040" /></Icon>,
  wave3: <Icon><rect x="2" y="3" width="16" height="15" fill="#f8f8ff" stroke="#7f9fd8" /><path d="M3 12l2-6 2 9 2-8 2 7 2-8 2 7 2-4" fill="none" stroke="#d03030" /></Icon>,
  pencil: <Icon><path d="M3 18l1-5L14 3l4 3L8 16z" fill="#e8a838" stroke="#8a6020" /><path d="M3 18l1-5 4 3z" fill="#f0d8a8" /><path d="M14 3l4 3-2 2-4-3z" fill="#c86030" /></Icon>,
  refresh: <Icon><rect x="2" y="2" width="16" height="16" fill="#fff" stroke="#7f9fd8" /><path d="M5 10a5 5 0 0 1 9-3l1-2v5h-4l2-1a3 3 0 0 0-6 1z" fill="#30a840" /><path d="M15 11a5 5 0 0 1-9 3l-1 2v-5h4l-2 1a3 3 0 0 0 6-1z" fill="#60c050" /></Icon>,
}

const Flower = () => (
  <LogoFlower viewBox="0 0 56 52">
    <ellipse cx="15" cy="16" rx="9" ry="14" fill="#55a8e4" transform="rotate(-40 15 16)" />
    <ellipse cx="30" cy="11" rx="8" ry="11" fill="#efb32c" />
    <ellipse cx="44" cy="25" rx="12" ry="8" fill="#a548b8" />
    <ellipse cx="32" cy="41" rx="8" ry="11" fill="#6cc238" transform="rotate(-15 32 41)" />
    <ellipse cx="12" cy="37" rx="8" ry="12" fill="#d85c68" transform="rotate(35 12 37)" />
    <circle cx="27" cy="25" r="8" fill="#f2f2ea" />
  </LogoFlower>
)

const Signals = () => {
  const cells = Array.from({ length: 14 }, (_, i) => i)
  const x = (i) => 4 + i * 7 + (i >= 7 ? 3 : 0)
  return (
    <SignalBox viewBox="0 0 108 20">
      {cells.map(i => <rect key={`t${i}`} x={x(i)} y="3" width="7" height="7" fill="#f6f6f0" stroke="#c8c8c0" strokeWidth=".6" />)}
      {cells.map(i => <rect key={`b${i}`} x={x(i)} y="12" width="6" height="2" fill="#e00000" />)}
      {cells.map(i => <rect key={`c${i}`} x={x(i)} y="15.5" width="6" height="2" fill="#e00000" />)}
      <rect x="24" y="3" width="3" height="7" fill="#b01010" />
      <rect x="27" y="3" width="2" height="7" fill="#109020" />
      <rect x="74" y="3" width="3" height="7" fill="#b01010" />
      <rect x="77" y="3" width="2" height="7" fill="#109020" />
    </SignalBox>
  )
}

const TrayIcons = () => (
  <StatusIcons viewBox="0 0 118 20">
    <path d="M8 4l5 5-3 0a3 3 0 0 1-3 3M8 16l-5-5 3 0a3 3 0 0 1 3-3" fill="none" stroke="#555" strokeWidth="1.5" />
    <rect x="19" y="3" width="14" height="13" rx="2" fill="#f4f8ff" stroke="#6a8fd0" />
    <path d="M22 10h8" stroke="#d8b020" strokeWidth="2" />
    <rect x="36" y="3" width="15" height="13" fill="#eaf0fa" stroke="#8aa0c8" />
    <path d="M36 3l7.5 7 7.5-7M36 16l6-7M51 16l-6-7" fill="none" stroke="#8aa0c8" />
    <rect x="55" y="2" width="13" height="16" rx="5" fill="#e8d030" stroke="#8a7a10" />
    <path d="M61.5 5l3 4h-2v4h-2V9h-2z" fill="#5a5010" />
    <path d="M81 8l-3 9M81 8l3 9M79 13h4M79 3a3 3 0 0 0 0 5M83 3a3 3 0 0 1 0 5" fill="none" stroke="#555" />
    <path d="M97 3l4 5h-8zM97 7l5 5h-10zM97 11l5 5h-10z" fill="#666" />
    <path d="M111 4v8M111 14v2" stroke="#555" strokeWidth="1.5" />
  </StatusIcons>
)

const FundPanel = ({ width, left, split }) => (
  <Panel $w={width} $pl={left} $split={split}>
    <FlowRow>
      <FlowLabels $side="left" $w={125}>买(54%)<br />33623.3</FlowLabels>
      <FlowBar>
        <FlowBuy />
        <FlowSell />
        <FlowTick />
        <FlowValue>5375.1</FlowValue>
      </FlowBar>
      <FlowLabels $w={80}>卖(46%)<br />28248.1</FlowLabels>
    </FlowRow>
    <Columns $ml={167}>
      <ColumnSlot>
        <ColumnText>2652.9</ColumnText>
        <ColumnBar $h={58} />
        <Baseline />
        <ColumnText>超大单</ColumnText>
      </ColumnSlot>
      <ColumnSlot>
        <ColumnText>1298.1</ColumnText>
        <ColumnBar $h={28} />
        <Baseline />
        <ColumnText>大单</ColumnText>
      </ColumnSlot>
      <ColumnSlot>
        <ColumnText>1492.0</ColumnText>
        <ColumnBar $h={33} />
        <Baseline />
        <ColumnText>中单</ColumnText>
      </ColumnSlot>
      <ColumnSlot>
        <ColumnText $green>小单</ColumnText>
        <SmallLine />
        <ColumnText $green>-68.0</ColumnText>
      </ColumnSlot>
    </Columns>
  </Panel>
)

const App = () => (
  <Page>
    <GlobalStyle />

    <MenuBar>
      <MenuLogo viewBox="0 0 16 16">
        <rect width="16" height="16" fill="#d81818" />
        <path d="M1 1l6 7 7-7v4L7 13 1 6z" fill="#fff" />
      </MenuLogo>
      {['系统', '功能', '深度', '报价', '分析'].map(m => <MenuItem key={m}>{m}</MenuItem>)}
      <MenuItem $ml={-3}>扩展市场行情</MenuItem>
      {['资讯', '工具', '帮助'].map(m => <MenuItem key={m}>{m}</MenuItem>)}
      <PoolButton>股票池</PoolButton>
      <MenuTitle $ml={367}>通达信金融终端</MenuTitle>
      <MenuTitle $ml={13}>兴蓉投资</MenuTitle>
      <ClockBox>18:54:27 周三</ClockBox>
      <QuoteButton>行情</QuoteButton>
      <MenuTitle $ml={28} $dim>工具</MenuTitle>
      <MenuTitle $ml={20} $dim>服务</MenuTitle>
    </MenuBar>

    <Main>
      <LeftColumn>
        <Chart>
          <Axis $w={55}>
            {priceLabels.map(([t, c]) => <AxisLabel key={t} $color={c}>{t}</AxisLabel>)}
            {volLabels.map(t => <AxisLabel key={t} $color={OLIVE}>{t}</AxisLabel>)}
          </Axis>
          <Plot viewBox="56 23 1356 660">
            <path d="M56.5 44V683" stroke={RED} />
            {gridY.map((y, i) => (
              <path
                key={y}
                d={`M56 ${y.toFixed(1)}H1412`}
                stroke={i === 7 || i === 14 ? '#a01010' : RED}
                strokeWidth={i === 7 || i === 14 ? 2 : 1}
              />
            ))}
            {gridX.map(x => <path key={x} d={`M${x}.5 44V683`} stroke="#8c1414" strokeDasharray="1 3" />)}
            <path d="M733.5 44V683" stroke="#a01414" />
            <path d={toPath(avgPoints)} fill="none" stroke="#ffff60" strokeWidth="1.2" />
            <path d={toPath(pricePoints)} fill="none" stroke="#f4f4f4" />
            {volBars.map(([x, y]) => (
              <path key={x} d={`M${Math.round(x) + 0.5} ${y.toFixed(1)}V683`} stroke="#d6d666" shapeRendering="crispEdges" />
            ))}
            <path d="M56 683H1412" stroke={RED} />
          </Plot>
          <Axis $w={51} $right>
            {pctLabels.map(([t, c], i) => <AxisLabel key={i} $right $color={c}>{t}</AxisLabel>)}
            {volLabels.map(t => <AxisLabel key={t} $right $color={OLIVE}>{t}</AxisLabel>)}
          </Axis>
          <ChartTitle>
            <TitleText $color="#a8a8a8" $mr={8}>兴蓉投资</TitleText>
            <TitleText>分时</TitleText>
            <TitleText $color="#f0f040">均线</TitleText>
            <TitleText $color="#c8c840">成交量</TitleText>
          </ChartTitle>
          <ChartStat>统计<StatIcon /></ChartStat>
          <PriceFlag>5.41</PriceFlag>
        </Chart>

        <TimeRow>
          <TimeLabel $ml={25}>09:30</TimeLabel>
          <TimeLabel $ml={308}>10:30</TimeLabel>
          <TimeLabel $ml={315}>13:00</TimeLabel>
          <TimeLabel $ml={309}>14:00</TimeLabel>
          <TimeCursor $ml={41}>14:13</TimeCursor>
        </TimeRow>

        <TabRow $h={17} $pr={3}>
          <Tab $active>成交量</Tab>
          <Tab>指标</Tab>
          <Tab>量比</Tab>
          <Tab>买卖力道</Tab>
          <Tab>竞价图</Tab>
          <Tab>资金驱动力</Tab>
          <Tab>资金博弈</Tab>
          <TabSpacer />
          <ZoomCell>+</ZoomCell>
          <ZoomCell>−</ZoomCell>
          <ZoomCell>0</ZoomCell>
        </TabRow>

        <PanelHeader>
          <HeaderCell $w={731} $split>
            <HeaderTitle>资金流向分布</HeaderTitle>
            <HeaderNote $mr={20}>兴蓉投资</HeaderNote>
            <HeaderNote>统计金额 (万元)</HeaderNote>
            <HeaderEnd>当日</HeaderEnd>
          </HeaderCell>
          <HeaderCell $w={731}>
            <HeaderTitle>资金多空对比</HeaderTitle>
            <HeaderEnd>五日 ▼</HeaderEnd>
          </HeaderCell>
        </PanelHeader>

        <Panels>
          <FundPanel width={731} left={0} split />
          <FundPanel width={731} left={0} />
        </Panels>

        <TabRow $h={16}>
          <Tab $lh={14}>扩展区</Tab>
          <Tab $lh={14}>关联报价</Tab>
          <Tab $lh={14} $active>资金分布</Tab>
          <Tab $lh={14}>主力轨迹</Tab>
          <Tab $lh={14} $olive>热点题材</Tab>
          <Tab $lh={14} $olive>一致预期</Tab>
          <Tab $lh={14} $olive>经济指标</Tab>
          <TabSpacer />
          <TabWide>图文F10</TabWide>
        </TabRow>
      </LeftColumn>

      <Quote>
        <QuoteHead>000598 兴蓉投资</QuoteHead>
        <Section>
          <QuoteRow>
            <Cn $col={1}>委比</Cn>
            <Num $col={2} $color={DOWN}>-61.21%</Num>
            <Cn $col={4}>委差</Cn>
            <Num $col={5} $color={DOWN}>-40288</Num>
          </QuoteRow>
        </Section>
        <Section $pt={1}>
          {sells.map(([n, p, v]) => (
            <QuoteRow key={n}>
              <Cn $col={1}>{n}</Cn>
              <Num $col={2}>{p}</Num>
              <Num $col={5} $color={OLIVE}>{v}</Num>
            </QuoteRow>
          ))}
        </Section>
        <Section $pt={1}>
          {buys.map(([n, p, v]) => (
            <QuoteRow key={n}>
              <Cn $col={1}>{n}</Cn>
              <Num $col={2}>{p}</Num>
              <Num $col={5} $color={OLIVE}>{v}</Num>
            </QuoteRow>
          ))}
        </Section>
        <Section $pt={1}>
          <QuoteRow><Cn $col={1}>现价</Cn><Num $col={2}>5.47</Num><Cn $col={4}>今开</Cn><Num $col={5}>5.36</Num></QuoteRow>
          <QuoteRow><Cn $col={1}>涨跌</Cn><Num $col={2}>0.16</Num><Cn $col={4}>最高</Cn><Num $col={5}>5.64</Num></QuoteRow>
          <QuoteRow><Cn $col={1}>涨幅</Cn><Num $col={2}>3.01%</Num><Cn $col={4}>最低</Cn><Num $col={5}>5.34</Num></QuoteRow>
          <QuoteRow><Cn $col={1}>总量</Cn><Num $col={2} $color={OLIVE}>114.8<NumCn>万</NumCn></Num><Cn $col={4}>量比</Cn><Num $col={5} $color={DOWN}>0.73</Num></QuoteRow>
          <QuoteRow><Cn $col={1}>外盘</Cn><Num $col={2}>622824</Num><Cn $col={4}>内盘</Cn><Num $col={5} $color={DOWN}>524974</Num></QuoteRow>
        </Section>
        <Section $pt={1}>
          <QuoteRow><Cn $col={1}>换手</Cn><Num $col={2} $color="#b0b0b0">6.63%</Num><Cn $col={4}>股本</Cn><Num $col={5} $color="#b0b0b0">29.9<NumCn>亿</NumCn></Num></QuoteRow>
          <QuoteRow><Cn $col={1}>净资</Cn><Num $col={2} $color="#b0b0b0">2.15</Num><Cn $col={4}>流通</Cn><Num $col={5} $color="#b0b0b0">17.3<NumCn>亿</NumCn></Num></QuoteRow>
          <QuoteRow><Cn $col={1} $fs={13}>收益(二)</Cn><Num $col={2} $color="#b0b0b0">0.137</Num><Cn $col={4} $fs={14}>PE(动)</Cn><Num $col={5} $color="#b0b0b0">20.0</Num></QuoteRow>
        </Section>
        <Section>
          <FlowInfoRow><Cn>净流入额</Cn><Num>5375<NumCn>万</NumCn></Num><Num>9%</Num></FlowInfoRow>
          <FlowInfoRow><Cn>大宗流入</Cn><Num>3951<NumCn>万</NumCn></Num><Num>6%</Num></FlowInfoRow>
        </Section>
        <Ticks>
          {ticks.map(([time, price, qty, side, n], i) => (
            <TickRow key={i}>
              <TickCell $left $color="#b4b4b4">{time}</TickCell>
              <TickCell $color={UP}>{price}</TickCell>
              <TickCell $color={qty >= 500 ? '#a422c8' : OLIVE}>{qty}</TickCell>
              <TickCell $left $pl={8} $color={side === 'B' ? '#c83a3a' : DOWN}>{side}</TickCell>
              <TickCell $color="#707070">{n}</TickCell>
            </TickRow>
          ))}
        </Ticks>
        <QuoteTabs>
          {['笔', '价', '细', '盘', '势', '指', '值', '主'].map((t, i) => (
            <QuoteTab key={t} $active={i === 0}>{t}</QuoteTab>
          ))}
        </QuoteTabs>
      </Quote>

      <Tools>
        <ToolSlot $h={21}>{toolIcons.up}</ToolSlot>
        <ToolSlot $h={21}>{toolIcons.down}</ToolSlot>
        <ToolSlot>{toolIcons.sheet}</ToolSlot>
        <ToolSlot>{toolIcons.grid}</ToolSlot>
        <ToolSlot>{toolIcons.line}</ToolSlot>
        <ToolSlot>{toolIcons.candle}</ToolSlot>
        <ToolSlot>{toolIcons.docs}</ToolSlot>
        <ToolSlot><ToolBox>F10</ToolBox></ToolSlot>
        <ToolSlot>{toolIcons.tree}</ToolSlot>
        <ToolSlot><ToolBox $orange>自</ToolBox></ToolSlot>
        <ToolSlot><ToolBox>Fiz</ToolBox></ToolSlot>
        <ToolSlot><ToolBox>f(x)</ToolBox></ToolSlot>
        <ToolSlot>{toolIcons.circle}</ToolSlot>
        <ToolSep />
        <ToolSlot>{toolIcons.wave1}</ToolSlot>
        <ToolSlot>{toolIcons.wave2}</ToolSlot>
        <ToolSlot>{toolIcons.wave3}</ToolSlot>
        <ToolSlot $fs={11}>10%</ToolSlot>
        <ToolSlot>{toolIcons.pencil}</ToolSlot>
        <ToolSep />
        <ToolSlot><ToolBox>F5</ToolBox></ToolSlot>
        <ToolSlot>{toolIcons.refresh}</ToolSlot>
        {['1', '5', '15', '30', '60', '日', '周', '月', 'N', '多', '季', '年'].map(t => (
          <ToolSlot key={t} $fs={12}>{t}</ToolSlot>
        ))}
        <ToolSep />
      </Tools>
    </Main>

    <Status>
      {indices.map(([name, idx, delta, pct, amt]) => {
        const down = delta.startsWith('-')
        return (
          <IndexCell key={name}>
            <IndexName>{name}</IndexName>
            <IndexNum $down={down}>{idx}</IndexNum>
            <IndexNum $right $down={down}>{delta}</IndexNum>
            <IndexNum $right $down={down}>{pct}</IndexNum>
            <IndexAmt>{amt}</IndexAmt>
          </IndexCell>
        )
      })}
      <Signals />
      <ServerName>招商深圳1 (资金流)</ServerName>
      <TrayIcons />
    </Status>
    <TaskStrip />

    <Logo>
      <Flower />
      <LogoText>
        <LogoName>分析家公式网</LogoName>
        <LogoUrl>www.88gs.com</LogoUrl>
      </LogoText>
    </Logo>

    <Dialog>
      <TitleBar>
        <DialogTitle>DDE和SUP数据选股</DialogTitle>
        <WinBtn>
          <svg width="12" height="12" viewBox="0 0 12 12"><rect x="1" y="8" width="6" height="3" fill="#fff" /></svg>
        </WinBtn>
        <WinBtn $off>
          <svg width="12" height="12" viewBox="0 0 12 12"><rect x="1.5" y="1.5" width="9" height="9" fill="none" stroke="#bcd0f4" /><path d="M1 2.5h10" stroke="#bcd0f4" strokeWidth="2" /></svg>
        </WinBtn>
        <WinBtn $close>
          <svg width="12" height="12" viewBox="0 0 12 12"><path d="M1.5 1.5l9 9M10.5 1.5l-9 9" stroke="#fff" strokeWidth="2" /></svg>
        </WinBtn>
      </TitleBar>

      <DialogBody>
        <Group>
          <TopBlock>
            <TopRows>
              <FormRow $h={18}>
                <Check on />
                <FormLabel>主力买入占比：</FormLabel>
                <NumInput>30</NumInput>
                <FormNote $ml={10}>%(主力买入成交量/当日成交量)</FormNote>
              </FormRow>
              <FormRow $h={18}>
                <Check on />
                <FormLabel>主力卖出占比：</FormLabel>
                <NumInput>30</NumInput>
                <FormNote $ml={10}>%(主力卖出成交量/当日成交量)</FormNote>
              </FormRow>
            </TopRows>
            <ButtonCol>
              <GrayButton $h={21}>全选</GrayButton>
            </ButtonCol>
            <ButtonCol>
              <GrayButton $h={23}>选股</GrayButton>
              <GrayButton $h={21}>结果存为板块</GrayButton>
            </ButtonCol>
            <Warning>使用此功能之前请确保数据的完整,可在盘后数据下载中下载数据</Warning>
          </TopBlock>
          <FormRow $h={20}>
            <Check on />
            <FormLabel>主力买卖力度对比：</FormLabel>
            <Combo $w={86}><ComboText>1天</ComboText><Chevron /></Combo>
            <Combo $w={72} $ml={10}><ComboText>80万股</ComboText><Chevron /></Combo>
            <FormNote $ml={10}>(主力买入成交量-主力卖出成交量)</FormNote>
          </FormRow>
          <FormRow $h={19} $mt={3}>
            <Check on />
            <FormLabel>主力资金换手率：</FormLabel>
            <Combo $w={86}><ComboText>1天</ComboText><Chevron /></Combo>
            <Combo $w={72} $ml={10} $fs={11}><ComboText>大于25%</ComboText><Chevron /></Combo>
            <FormNote $ml={10} $pt={5}>(主力买入成交资金/当天成交金额)</FormNote>
          </FormRow>
          <FormRow $h={20} $mt={8}>
            <Check />
            <FormLabel>机构动向占比：</FormLabel>
            <Combo $w={86}><ComboText>1天</ComboText><Chevron /></Combo>
            <Combo $w={72} $ml={10} $fs={10}><ComboText>80%-100%</ComboText><Chevron /></Combo>
            <FormNote $ml={10} $pt={5}>(主力买入成交量-主力卖成交量) / (主力买入成交量+主力卖出成交量)</FormNote>
          </FormRow>
        </Group>

        <ListWrap>
          <ListMain>
            <Table>
              <HeadRow>
                <Cell $left $color="#777">代码</Cell>
                <Cell $left $color="#777">名称</Cell>
                <Cell $color="#777">现价</Cell>
                <Cell $color="#777">涨幅%</Cell>
                <Cell $color="#777">量比</Cell>
                <Cell $color="#777">换手%</Cell>
                <Cell $color="#777">机构动向</Cell>
                <Cell $color="#777">总委差(万)</Cell>
                <Cell $color="#777">主力换手(%)</Cell>
                <Cell $color="#777">大单净额(万)</Cell>
              </HeadRow>
              {stocks.map(s => (
                <DataRow key={s[0]}>
                  <Cell $left $bold $color="#ffff80">{s[0]}</Cell>
                  <Cell $left $color="#ffffa0" $fs={16}>{s[1]}</Cell>
                  <Cell>{s[2]}</Cell>
                  <Cell>{s[3]}</Cell>
                  <Cell>{s[4]}</Cell>
                  <Cell $color="#b4b4b4">{s[5]}</Cell>
                  <Cell $color={s[6] === '0.00' ? '#f4f4f4' : UP}>{s[6]}</Cell>
                  <Cell $color={s[7].startsWith('-') ? DOWN : UP}>{s[7]}</Cell>
                  <Cell>{s[8]}</Cell>
                  <Cell>{s[9]}</Cell>
                </DataRow>
              ))}
            </Table>
            <VScroll>
              <ScrollBtn $w={14} $h={14} viewBox="0 0 14 14"><path d="M3 9l4-4 4 4" fill="none" stroke="#222" strokeWidth="1.5" /></ScrollBtn>
              <VThumb />
              <VTrack />
              <ScrollBtn $w={14} $h={14} viewBox="0 0 14 14"><path d="M3 5l4 4 4-4" fill="none" stroke="#222" strokeWidth="1.5" /></ScrollBtn>
            </VScroll>
          </ListMain>
          <HScroll>
            <ScrollBtn $w={14} $h={15} viewBox="0 0 14 15"><path d="M9 3l-4 4.5 4 4.5" fill="none" stroke="#222" strokeWidth="1.5" /></ScrollBtn>
            <HThumb />
            <ScrollBtn $w={14} $h={15} viewBox="0 0 14 15"><path d="M5 3l4 4.5-4 4.5" fill="none" stroke="#222" strokeWidth="1.5" /></ScrollBtn>
          </HScroll>
        </ListWrap>
      </DialogBody>
    </Dialog>
  </Page>
)

export default App
